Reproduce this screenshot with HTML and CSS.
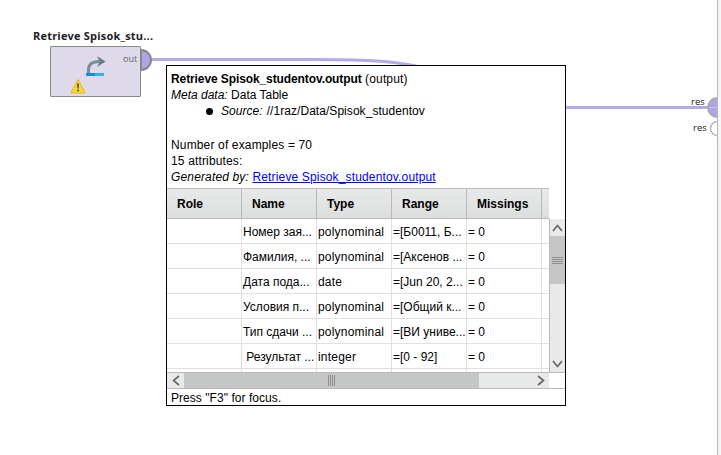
FILE: index.html
```
<!DOCTYPE html>
<html lang="ru">
<head>
    <meta charset="UTF-8">
    <meta name="viewport" content="width=device-width, initial-scale=1.0">
    <title>Retrieve Spisok_studentov</title>
    <link rel="stylesheet" href="styles.css">
</head>
<body>

    <div class="canvas">
        <svg class="wires" width="717" height="455" viewBox="0 0 717 455">
            <path class="wire" d="M150 59.500H310C360 59.500 390 60.500 416 66C480 78 510 107.500 570 107.500H709"/>
            <path class="wire-core" d="M150 59.500H310C360 59.500 390 60.500 416 66C480 78 510 107.500 570 107.500H709"/>
            <path class="port" d="M141 50A10 10 0 0 1 141 70Z"/>
            <circle class="port result" cx="717.500" cy="107.500" r="9.500"/>
            <path d="M709 107.500H717" stroke="#cfc5f2"/>
            <circle class="port empty" cx="717.500" cy="128.500" r="7"/>
        </svg>

        <div class="operator">
            <div class="operator-name">Retrieve Spisok_stu...</div>
            <div class="operator-box">
                <svg class="operator-icon" width="90" height="50" viewBox="0 0 90 50">
                    <path d="M38.500 27.500V24C38.500 18 42 15.500 49 15.500" fill="none" stroke="#7b8c95" stroke-width="3"/>
                    <path d="M47 10L55.500 15.500L47 21L49.500 15.500Z" fill="#667c87"/>
                    <path d="M36 27H45V30H36Z" fill="#1290d6"/>
                    <path d="M45 27H54V30H45Z" fill="#36b0ec"/>
                    <path d="M28 33.500L35.200 47H20.800Z" fill="#fbd634" stroke="#e3b81c" stroke-linejoin="round"/>
                    <path d="M27 37.500H29L28.700 42.500H27.300ZM27 43.700H29V45.300H27Z" fill="#5c5630"/>
                </svg>
                <span class="port-label">out</span>
            </div>
        </div>

        <span class="result-label first">res</span>
        <span class="result-label second">res</span>
    </div>

    <div class="tooltip">
        <div class="info">
            <p><b>Retrieve Spisok_studentov.output</b> (output)</p>
            <p class="meta"><i>Meta data:</i> Data Table</p>
            <p class="source"><span class="bullet"></span><i>Source:</i> //1raz/Data/Spisok_studentov</p>
            <p class="examples">Number of examples = 70</p>
            <p>15 attributes:</p>
            <p><i>Generated by:</i> <a href="#">Retrieve Spisok_studentov.output</a></p>
        </div>

        <div class="table-area">
            <div class="table">
                <div class="row head"><span>Role</span><span>Name</span><span>Type</span><span>Range</span><span>Missings</span><span></span></div>
                <div class="rows">
                    <div class="row"><span></span><span>Номер зая...</span><span class="type">polynominal</span><span>=[Б0011, Б...</span><span>= 0</span><span></span></div>
                    <div class="row"><span></span><span>Фамилия, ...</span><span class="type">polynominal</span><span>=[Аксенов ...</span><span>= 0</span><span></span></div>
                    <div class="row"><span></span><span>Дата пода...</span><span class="type">date</span><span>=[Jun 20, 2...</span><span>= 0</span><span></span></div>
                    <div class="row"><span></span><span>Условия п...</span><span class="type">polynominal</span><span>=[Общий к...</span><span>= 0</span><span></span></div>
                    <div class="row"><span></span><span>Тип сдачи ...</span><span class="type">polynominal</span><span>=[ВИ униве...</span><span>= 0</span><span></span></div>
                    <div class="row"><span></span><span>&nbsp;Результат ...</span><span class="type">integer</span><span>=[0 - 92]</span><span>= 0</span><span></span></div>
                    <div class="row"><span></span><span></span><span></span><span></span><span></span><span></span></div>
                </div>
            </div>
            <div class="scroll-y">
                <svg width="15" height="153" viewBox="0 0 15 153">
                    <path class="thumb" d="M0 17H15V65H0Z"/>
                    <path class="grip" d="M2 38.500H13M2 40.500H13M2 42.500H13M2 44.500H13"/>
                    <path class="arrow" d="M3 12L7.500 6.500L12 12M3 142L7.500 147.500L12 142"/>
                </svg>
            </div>
        </div>

        <div class="scroll-x">
            <svg width="382" height="15" viewBox="0 0 382 15">
                <path class="thumb" d="M17 0H312V15H17Z"/>
                <path class="grip" d="M161.500 2V13M163.500 2V13M165.500 2V13M167.500 2V13"/>
                <path class="arrow" d="M12 3L6.500 7.500L12 12M371 3L376.500 7.500L371 12"/>
            </svg>
        </div>

        <div class="footer">Press "F3" for focus.</div>
    </div>

</body>
</html>
```
FILE: styles.css
```
* {
    box-sizing: border-box;
}

body {
    margin: 0;
    height: 455px;
    overflow: hidden;
    background: #f7f6f6;
    font-family: "Liberation Sans", Arial, sans-serif;
    font-size: 12px;
    color: #000;
}

p {
    margin: 0;
}

/* process canvas */
.canvas {
    position: relative;
    width: 718px;
    height: 455px;
    background: #fff;
    border-right: 1px solid #b9b8b8;
}

.wires {
    display: block;
}

.wire {
    fill: none;
    stroke: #b5a6e8;
    stroke-width: 3;
}

.wire-core {
    fill: none;
    stroke: #baadec;
    stroke-width: 1;
}

.port {
    fill: #b1a3e8;
    stroke: #888;
    stroke-width: 2;
}

.port.result {
    stroke: #aaa;
}

.port.empty {
    fill: #fff;
    stroke: #b5b5b5;
    stroke-width: 1.5;
}

.operator {
    position: absolute;
    left: 33px;
    top: 29px;
}

.operator-name {
    height: 17px;
    line-height: 14px;
    font-family: "Open Sans", sans-serif;
    font-size: 11px;
    font-weight: bold;
    letter-spacing: 0.2px;
    color: #222;
    white-space: nowrap;
}

.operator-box {
    display: flex;
    width: 91px;
    height: 51px;
    margin-left: 17px;
    background: #dedaea;
    border: 1px solid #888;
    border-radius: 1px;
}

.operator-icon {
    flex: none;
    margin: -1px -17px 0 -1px;
}

.port-label {
    margin-top: 6px;
    margin-left: 0;
    line-height: 12px;
    font-family: "Open Sans", sans-serif;
    font-size: 9px;
    color: #666;
}

.result-label {
    position: absolute;
    line-height: 12px;
    font-family: "Open Sans", sans-serif;
    font-size: 9.5px;
    color: #222;
}

.first {
    left: 691px;
    top: 96px;
}

.second {
    left: 693px;
    top: 122px;
}

/* tooltip */
.tooltip {
    position: absolute;
    left: 166px;
    top: 65px;
    width: 400px;
    height: 341px;
    background: #fff;
    border: 1px solid #000;
}

.info {
    height: 122px;
    padding: 5px 4px 0;
    line-height: 16px;
    letter-spacing: 0.15px;
    white-space: nowrap;
}

.info b {
    letter-spacing: -0.1px;
}

.source {
    letter-spacing: 0.05px;
}

.meta {
    letter-spacing: 0;
}

.source {
    display: flex;
    align-items: center;
    gap: 4px;
    padding-left: 35px;
}

.bullet {
    width: 7px;
    height: 7px;
    margin-right: 4px;
    background: #000;
    border-radius: 50%;
}

.examples {
    margin-top: 18px;
}

a {
    color: #00f;
}

.table-area {
    display: flex;
    height: 184px;
}

.table {
    width: 382px;
    overflow: hidden;
}

.row {
    display: grid;
    grid-template-columns: 75px 75px 75px 75px 75px 7px;
    grid-template-rows: 25px;
    height: 25px;
    line-height: 26px;
    white-space: nowrap;
}

.row span {
    padding-left: 1px;
    border-right: 1px solid #e0e0e0;
    border-bottom: 1px solid #e0e0e0;
}

.row span:last-child {
    border-right: none;
}

.row .type {
    letter-spacing: 0.2px;
}

.row.head {
    grid-template-rows: 30px;
    height: 31px;
    line-height: 30px;
    font-weight: bold;
    background: linear-gradient(#e8e9e9, #dcdddd);
    border-top: 1px solid #b9b9b9;
}

.row.head span {
    padding-left: 10px;
    border-color: #b9b9b9;
}

.rows {
    height: 153px;
    overflow: hidden;
}

.scroll-y {
    width: 16px;
    height: 153px;
    margin-top: 31px;
    background: #e8e9e9;
    border-left: 1px solid #b9b9b9;
}

.scroll-y svg,
.scroll-x svg {
    display: block;
}

.scroll-x {
    height: 17px;
    border-top: 1px solid #b9b9b9;
    border-bottom: 1px solid #b9b9b9;
}

.scroll-x svg {
    background: #e8e9e9;
}

.thumb {
    fill: #c5c6c6;
}

.grip {
    stroke: #8f8f8f;
}

.arrow {
    fill: none;
    stroke: #686868;
    stroke-width: 1.7;
}

.footer {
    padding-left: 4px;
    line-height: 18px;
    letter-spacing: 0.05px;
}
```
